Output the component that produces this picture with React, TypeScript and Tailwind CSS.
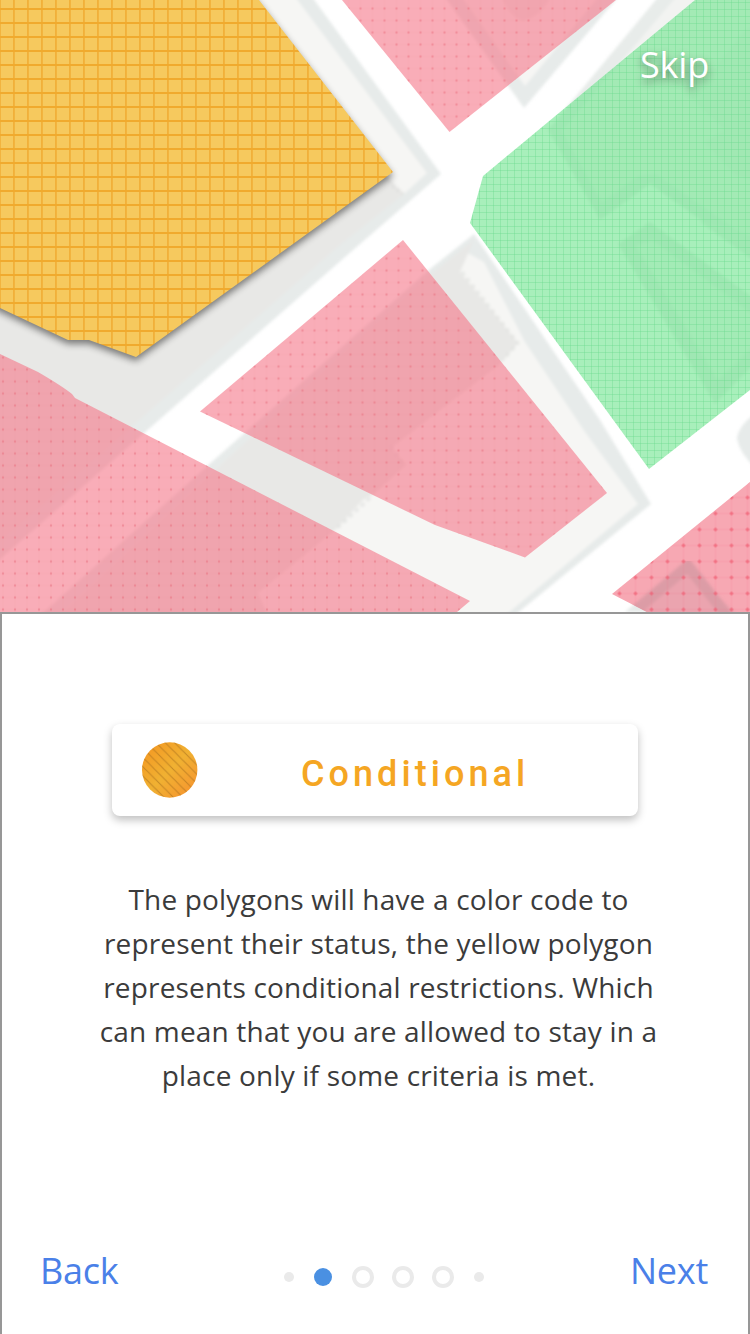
const PINK = '#f57689';

function MapPreview() {
  return (
    <svg className="block h-full w-full" viewBox="0 0 750 612" preserveAspectRatio="xMidYMin slice" aria-hidden="true">
      <defs>
        <filter id="soft" x="-5%" y="-5%" width="110%" height="110%" colorInterpolationFilters="sRGB">
          <feGaussianBlur stdDeviation="1.7" />
        </filter>
        <filter id="lift" x="-10%" y="-10%" width="120%" height="120%" colorInterpolationFilters="sRGB">
          <feDropShadow dx="0" dy="4" stdDeviation="3.8" floodColor="#000" floodOpacity="0.48" />
        </filter>
        <pattern id="yellowGrid" x="0" y="0" width="14" height="14" patternUnits="userSpaceOnUse">
          <rect width="14" height="14" fill="#f6c95e" />
          <rect x="13" width="1" height="14" fill="#f1b03a" />
          <rect x="0" width="1" height="14" fill="#f2b43f" />
          <rect y="8" width="14" height="2" fill="#f0aa2e" />
        </pattern>
        <pattern id="greenGrid" x="3" y="2" width="7" height="7" patternUnits="userSpaceOnUse">
          <rect width="7" height="7" fill="#6ee48e" fillOpacity="0.6" />
          <rect x="0" width="1" height="7" fill="#66d98a" fillOpacity="0.34" />
          <rect y="0" width="7" height="1" fill="#66d98a" fillOpacity="0.34" />
        </pattern>
        <pattern id="dotsTop" x="354.500" y="2.500" width="12" height="12" patternUnits="userSpaceOnUse">
          <path d="M6 0v12M0 6h12" stroke="#ee6f80" strokeOpacity="0.06" />
          <circle cx="6" cy="6" r="1.200" fill="#ee6f80" fillOpacity="0.5" />
        </pattern>
        <pattern id="dotsCenter" x="248.500" y="252.500" width="12" height="12" patternUnits="userSpaceOnUse">
          <path d="M6 0v12M0 6h12" stroke="#ee6f80" strokeOpacity="0.06" />
          <circle cx="6" cy="6" r="1.200" fill="#e96f80" fillOpacity="0.5" />
        </pattern>
        <pattern id="dotsLeft" x="-3" y="363.500" width="12" height="12" patternUnits="userSpaceOnUse">
          <path d="M6 0v12M0 6h12" stroke="#ee6f80" strokeOpacity="0.06" />
          <circle cx="6" cy="6" r="1.200" fill="#e96f80" fillOpacity="0.5" />
        </pattern>
        <pattern id="dotsCorner" x="643.500" y="585.500" width="16" height="16" patternUnits="userSpaceOnUse">
          <path d="M8 0v16M0 8h16" stroke="#ee5f75" strokeOpacity="0.15" />
          <path d="M8 5.800L10.200 8L8 10.200L5.800 8Z" fill="#f0596f" fillOpacity="0.65" />
        </pattern>
        <clipPath id="cornerClip">
          <path d="M750 482L612 594L647 612H750Z" />
        </clipPath>
      </defs>

      <rect width="750" height="612" fill="#fff" />

      <g filter="url(#soft)">
        {/* north-west block */}
        <path d="M-10 -10H307L441 174L352 251L-10 568Z" fill="#e7ebea" />
        <path d="M-10 -10H289L427 172L404 194L340 245L-10 550Z" fill="#e8e8e6" />
        <path d="M240 -10H290L427 173L404 194L388 177Z" fill="#f6f6f4" />
        <path d="M392 186L403 194" stroke="#dededc" strokeWidth="3" strokeDasharray="3 3" />

        {/* central block */}
        <path d="M474 234L430 269L205 468L35 620H509L651 504L600 420Z" fill="#e7ebea" />
        <path d="M466 252L436 275L215 470L55 620H500L638 504L585 432L525 342L484 262Z" fill="#f6f6f4" />
        <path d="M474 240L430 275L215 470L55 620H270L258 593L335 530L363 500L375 493L406 465L391 448L500 364L518 343L460 272Z" fill="#e8e8e6" />
        <path d="M462 272L518 343L503 360" fill="none" stroke="#dcdddb" strokeOpacity="0.6" strokeWidth="3" strokeDasharray="4 4" />
        <path d="M391 446L405 466M370 498L335 530" fill="none" stroke="#dcdddb" strokeOpacity="0.7" strokeWidth="3" strokeDasharray="4 4" />

        {/* north block */}
        <path d="M440 -10L524 108L624 -10Z" fill="#e7ebea" />
        <path d="M457 -10L525 86L604 -10Z" fill="#f6f6f4" />
        <path d="M500 -10Q505 14 522 21Q542 18 555 -10Z" fill="#ecebe9" />

        {/* north-east block */}
        <path d="M664 -10L548 130L600 220L650 184L760 262V-10Z" fill="#e8ecea" />
        <path d="M682 -10L562 131L602 202L638 176L656 174L760 246V-10Z" fill="#f2f3f1" />
        <path d="M760 25L745 30L690 98L725 130L704 142L735 175L760 182Z" fill="#ededeb" />
        <path d="M618 244L650 222L760 303V358L715 404Z" fill="#e8ecea" />
        <path d="M636 246L652 240L760 320V340L718 380Z" fill="#f3f4f2" />
        <path d="M700 222L760 265V240L728 226Z" fill="#eaedeb" />
        <path d="M760 410Q738 425 737 439Q740 455 760 472Z" fill="#e7ebea" />

        {/* south-east block */}
        <path d="M687 560L625 612H735Z" fill="#e7ebea" />
      </g>

      <g fill={PINK} fillOpacity="0.6">
        <path d="M342 0L449.500 132L616 0Z" />
        <path d="M403 240L607 493L525 557.500L435 525L200 411.500Z" />
        <path d="M0 354L38 372Q62 386 72 394L75 398L470 601L457 612H0Z" />
      </g>
      <path d="M342 0L449.500 132L616 0Z" fill="url(#dotsTop)" />
      <path d="M403 240L607 493L525 557.500L435 525L200 411.500Z" fill="url(#dotsCenter)" />
      <path d="M0 354L38 372Q62 386 72 394L75 398L470 601L457 612H0Z" fill="url(#dotsLeft)" />

      <g clipPath="url(#cornerClip)">
        <rect x="600" y="480" width="150" height="132" fill="#f7a8b3" />
        <g filter="url(#soft)">
          <path d="M687 564L625 620H742Z" fill="#eba4af" />
          <path d="M622 622L688 566L732 622" fill="none" stroke="#dc9ca6" strokeWidth="11" />
        </g>
        <rect x="600" y="480" width="150" height="132" fill="url(#dotsCorner)" />
      </g>

      <path d="M695 0H750V390L649 469L470 223L483 176Z" fill="url(#greenGrid)" />
      <path d="M0 -20H243L259 0L393 172L136 357L89 340H68L0 308L-20 298V-20Z" fill="url(#yellowGrid)" filter="url(#lift)" />
    </svg>
  );
}

function StatusSwatch() {
  return (
    <svg className="h-14 w-14" viewBox="0 0 56 56" aria-hidden="true">
      <defs>
        <linearGradient id="amber" x1="0" y1="0" x2="1" y2="1">
          <stop offset="0.1" stopColor="#f49a24" />
          <stop offset="0.5" stopColor="#f0b132" />
          <stop offset="0.95" stopColor="#f7942f" />
        </linearGradient>
        <pattern id="hatch" x="4" y="0" width="9.300" height="9.300" patternUnits="userSpaceOnUse">
          <path d="M-2 -2L11.300 11.300M-2 7.300L2 11.300M7.300 -2L11.300 2" stroke="#a8701c" strokeOpacity="0.6" strokeWidth="1.100" />
        </pattern>
      </defs>
      <circle cx="27.700" cy="28" r="27.700" fill="url(#amber)" />
      <circle cx="27.700" cy="28" r="27.700" fill="url(#hatch)" />
    </svg>
  );
}

function Ring() {
  return <span className="h-[22px] w-[22px] rounded-full border-4 border-[#eaeaea]" />;
}

function Pager() {
  return (
    <div className="flex items-center">
      <span className="h-2.5 w-2.5 rounded-full bg-[#eaeaea]" />
      <span className="ml-5 h-[18px] w-[18px] rounded-full bg-[#4a90e2]" />
      <div className="ml-5 flex gap-[18px]">
        <Ring />
        <Ring />
        <Ring />
      </div>
      <span className="ml-5 h-2.5 w-2.5 rounded-full bg-[#eaeaea]" />
    </div>
  );
}

const copy = [
  'The polygons will have a color code to',
  'represent their status, the yellow polygon',
  'represents conditional restrictions. Which',
  'can mean that you are allowed to stay in a',
  'place only if some criteria is met.',
];

export default function App() {
  return (
    <main className="flex h-[1334px] w-[750px] flex-col overflow-hidden bg-white font-['Open_Sans',sans-serif]">
      <section className="relative h-[612px] shrink-0">
        <MapPreview />
        <button className="absolute top-10 right-[41px] text-[36px] leading-[49px] tracking-[-0.2px] text-white [text-shadow:0_4px_8px_rgba(0,0,0,0.42)]">
          Skip
        </button>
      </section>
      <section className="flex flex-1 flex-col border-2 border-b-0 border-[#979797] bg-white px-[38px]">
        <div className="mx-auto mt-[110px] flex h-[92px] w-[526px] shrink-0 items-center rounded-lg bg-white pl-[30px] shadow-[0_4px_8px_rgba(0,0,0,0.25)]">
          <StatusSwatch />
          <h1 className="ml-[103px] pt-[8px] font-['Roboto',sans-serif] text-[36px] leading-[42px] font-medium tracking-[4.05px] whitespace-nowrap text-[#f5a623]">
            Conditional
          </h1>
        </div>
        <p className="mt-[61px] ml-[7px] text-center text-[28px] leading-[44px] tracking-[0.18px] whitespace-nowrap text-[#3b3b3b]">
          {copy.map((line) => (
            <span key={line} className="block">
              {line}
            </span>
          ))}
        </p>
        <nav className="mt-auto mb-[39px] flex items-center text-[36px] leading-[49px] tracking-[-0.25px] text-[#4a80e8]">
          <button className="w-[244px] text-left">Back</button>
          <div className="pt-3">
            <Pager />
          </div>
          <button className="ml-auto pr-[2px] text-right">Next</button>
        </nav>
      </section>
    </main>
  );
}
